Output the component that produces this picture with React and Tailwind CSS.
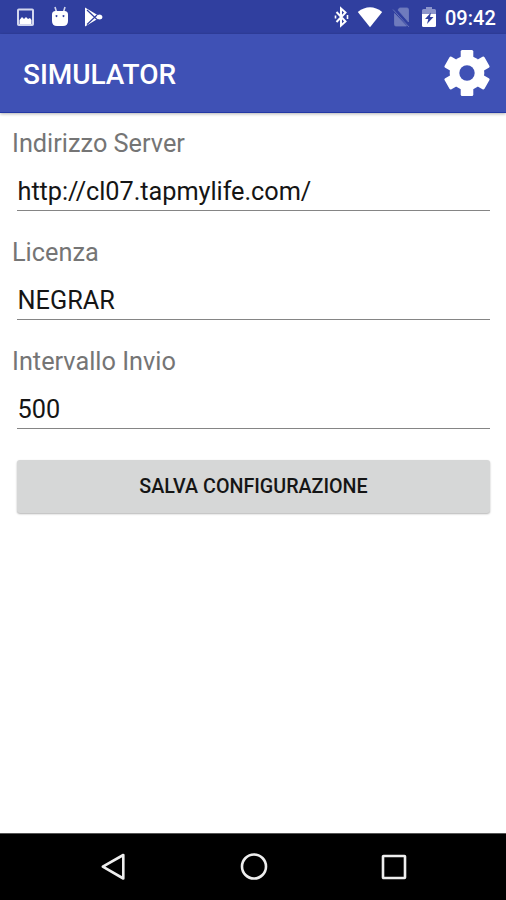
const fields = [
  { name: 'server', label: 'Indirizzo Server', value: 'http://cl07.tapmylife.com/', spacing: 'tracking-[-0.05px]' },
  { name: 'license', label: 'Licenza', value: 'NEGRAR', spacing: '' },
  { name: 'interval', label: 'Intervallo Invio', value: '500', spacing: '' },
]

function StatusBar() {
  return (
    <div className="flex h-[34px] items-center justify-between bg-[#303f9f] pl-[16px] pr-[11px] text-white">
      <div className="flex items-center">
        <svg className="h-[20px] w-[19px]" viewBox="0 0 19 20">
          <rect x="2" y="2.5" width="15" height="15.5" rx="0.8" fill="none" stroke="#d3d7ee" strokeWidth="2" />
          <path d="M3.500 17v-4l2.500-3 2 2 2-2 2 2 2-1 1.500 2v4z" fill="white" />
        </svg>
        <svg className="ml-[16px] h-[22px] w-[18px]" viewBox="0 0 18 22" fill="white">
          <path d="M4 1l1.500 5M14 1l-1.500 5" stroke="#d3d7ee" strokeWidth="1.600" />
          <path fillRule="evenodd" d="M4.500 5h9q3.500 0 3.500 3.500V15q0 5-5 5H6q-5 0-5-5V8.500Q1 5 4.500 5zM5.500 9a1 1 0 1 0 .01 0zM12.500 9a1 1 0 1 0 .01 0z" />
        </svg>
        <svg className="ml-[14px] h-[22px] w-[21px]" viewBox="0 0 21 22">
          <path d="M2 1.500L14.500 9l2.500-.5q2.500.5 2.500 2.500t-2.500 2.500l-2.500-.5L2 20.500z" fill="white" />
          <path d="M4 4l10 9.500M4 18.500L14 9" stroke="#303f9f" strokeWidth="1.200" />
        </svg>
      </div>
      <div className="flex items-center">
        <svg className="h-[22px] w-[16px]" viewBox="0 0 16 22" fill="none" stroke="white" strokeWidth="2">
          <path d="M2.500 6l9 9.500L7 19.500v-17l4.500 4L2.500 16" />
          <path d="M1.500 9.500v3M13.500 9v4" strokeWidth="1.600" />
        </svg>
        <svg className="ml-[7px] h-[22px] w-[26px]" viewBox="0 0 26 22">
          <path d="M.8 6Q13-3.300 25.200 6L13 21.300z" fill="white" />
        </svg>
        <svg className="ml-[9px] h-[22px] w-[19px]" viewBox="0 0 19 22">
          <path d="M7.500 2H15q1.500 0 1.500 1.500V16L6 4zM2.500 7.500L14.500 20H4q-1.500 0-1.500-1.500zM1 3.500L17 21" fill="#6f7bbd" stroke="#6f7bbd" strokeWidth="0.800" />
        </svg>
        <svg className="ml-[10px] h-[22px] w-[16px]" viewBox="0 0 16 22">
          <path d="M1 8V4.500Q1 3 2.500 3H5V1h6v2h2.500Q15 3 15 4.500V8z" fill="#8c95cb" />
          <path d="M1 8h14v11.500q0 1.500-1.500 1.500h-11Q1 21 1 19.500z" fill="white" />
          <path d="M10 6.500L4 13h3.300l-1.300 5L12.500 11H9z" fill="#303f9f" />
        </svg>
        <span className="ml-[8px] w-[50px] pt-[2px] text-[20px] leading-none font-medium whitespace-nowrap">09:42</span>
      </div>
    </div>
  )
}

function GearIcon() {
  return (
    <svg className="h-[46px] w-[46px]" viewBox="-23 -23 46 46">
      <g fill="white">
        <circle r="17.300" />
        <rect x="-6.300" y="-23" width="12.600" height="46" rx="1.500" />
        <rect x="-6.300" y="-23" width="12.600" height="46" rx="1.500" transform="rotate(60)" />
        <rect x="-6.300" y="-23" width="12.600" height="46" rx="1.500" transform="rotate(120)" />
      </g>
      <circle r="7.700" fill="#3f51b5" />
    </svg>
  )
}

function AppBar() {
  return (
    <header className="relative flex h-[79px] items-center justify-between border-b border-[#2338a5] bg-[#3f51b5] pr-[16px] pl-[23px] shadow-[0_1px_3px_rgba(0,0,0,0.3)]">
      <h1 className="pt-[4px] text-[28px] leading-none font-medium tracking-[-0.050px] text-white">SIMULATOR</h1>
      <button type="button" aria-label="Impostazioni">
        <GearIcon />
      </button>
    </header>
  )
}

function Field({ name, label, value, spacing }) {
  return (
    <div className="h-[109px]">
      <label htmlFor={name} className="block h-[30px] pl-[12px] text-[25.300px] leading-[30px] text-[#757575]">
        {label}
      </label>
      <div className="mt-[13px] mr-[16px] ml-[17px] h-[39px] border-b border-[#858585]">
        <input
          id={name}
          defaultValue={value}
          className={`block h-[38px] w-full bg-transparent pt-[1px] pl-[0.500px] text-[25.300px] leading-[37px] text-[#151515] outline-none ${spacing}`}
        />
      </div>
    </div>
  )
}

function NavBar() {
  return (
    <nav className="flex h-[67px] items-center justify-between border-t border-[#555] bg-black pr-[97px] pl-[98px]">
      <svg className="h-[30px] w-[30px]" viewBox="0 0 30 30" fill="none" stroke="#eee" strokeWidth="2.600" strokeLinejoin="round">
        <path d="M25.300 3v23.500L4.800 14.700z" />
      </svg>
      <svg className="h-[30px] w-[30px]" viewBox="0 0 30 30" fill="none" stroke="#eee" strokeWidth="2.600">
        <circle cx="15" cy="14.500" r="12" />
      </svg>
      <svg className="h-[30px] w-[30px]" viewBox="0 0 30 30" fill="none" stroke="#eee" strokeWidth="2.600">
        <rect x="4" y="4" width="22" height="22" rx="0.500" />
      </svg>
    </nav>
  )
}

export default function App() {
  return (
    <div className="flex h-[900px] w-[506px] flex-col overflow-hidden bg-white font-['Roboto',sans-serif]">
      <StatusBar />
      <AppBar />
      <main className="flex-1 pt-[16px]">
        {fields.map((field) => (
          <Field key={field.name} {...field} />
        ))}
        <div className="pt-[4px] pr-[16px] pl-[17px]">
          <button
            type="button"
            className="h-[53px] w-full rounded-[3px] bg-[#d6d7d7] pt-[1px] text-[19.700px] font-medium text-[#151515] shadow-[0_1px_2px_rgba(0,0,0,0.3)]"
          >
            SALVA CONFIGURAZIONE
          </button>
        </div>
      </main>
      <NavBar />
    </div>
  )
}
